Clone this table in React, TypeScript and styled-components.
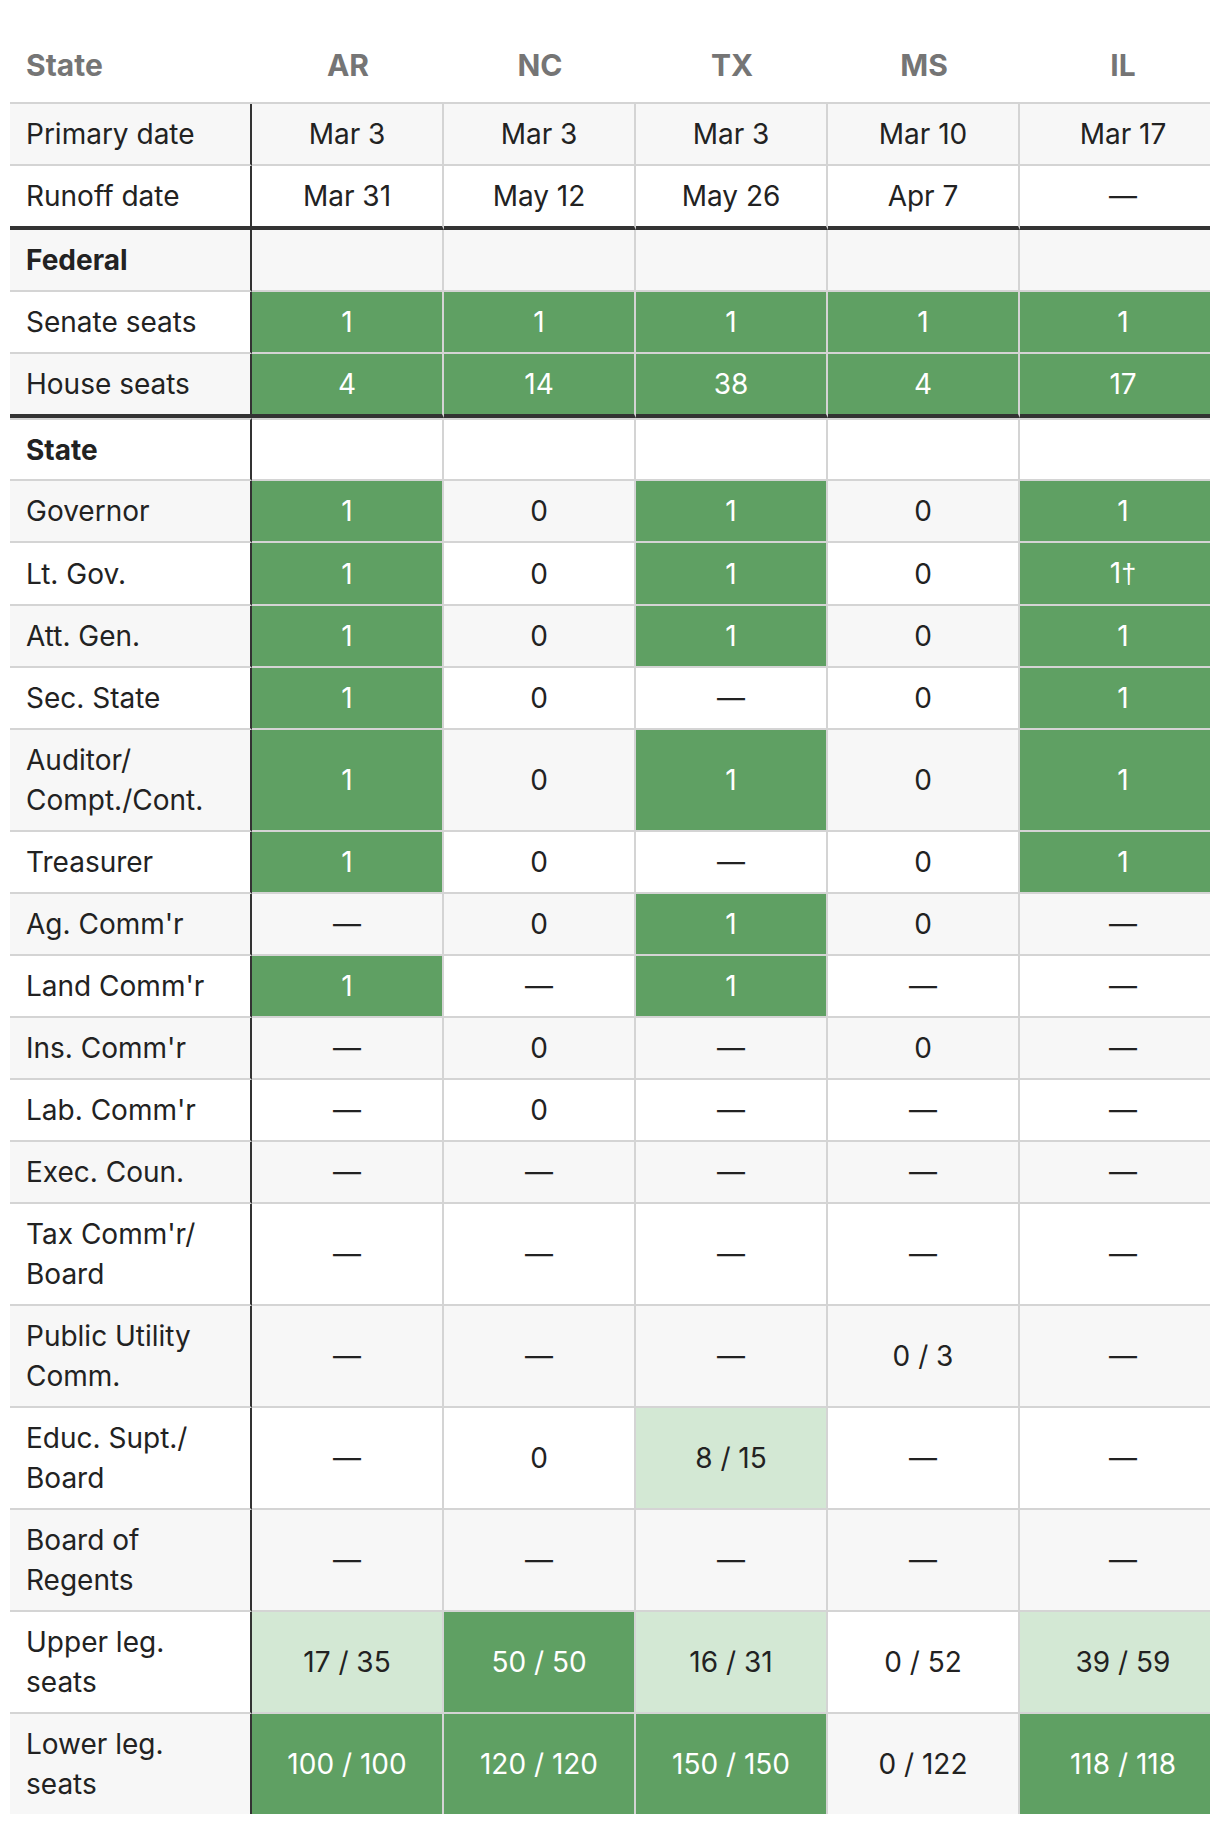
import React from 'react';
import styled, { createGlobalStyle, css } from 'styled-components';

type Tone = 'strong' | 'soft' | 'none';

interface Cell {
    text: string;
    tone?: Tone;
    mark?: string;
}

interface RowData {
    label: string;
    cells: Cell[];
    section?: boolean;
    rule?: boolean;
    topRule?: boolean;
}

const GlobalStyle = createGlobalStyle`
  *, *::before, *::after {
    box-sizing: border-box;
  }
  body {
    margin: 0 10px 10px;
    background: #fff;
    font-family: Inter, "Noto Sans", "Liberation Sans", sans-serif;
    color: #222;
  }
`;

// the table is a bit wider than the page, the last column gets clipped
const Scroller = styled.div`
  width: 100%;
  overflow: hidden;
`;

const Table = styled.table`
  width: calc(100% + 16px);
  table-layout: fixed;
  border-collapse: separate;
  border-spacing: 0;
  font-size: 28px;
  line-height: 40px;
`;

const Col = styled.col<{ $width?: number }>`
  ${p =>
        p.$width &&
        css`
      width: ${p.$width}px;
    `}
`;

const HeadCell = styled.th<{ $left?: boolean }>`
  padding: 45px 16px 17px;
  text-align: ${p => (p.$left ? 'left' : 'center')};
  font-size: 30px;
  font-weight: 700;
  color: #757575;
  border-bottom: 2px solid #d4d4d4;
`;

const Row = styled.tr<{ $striped: boolean; $rule?: boolean; $topRule?: boolean }>`
  background: ${p => (p.$striped ? '#f7f7f7' : '#fff')};

  & > th,
  & > td {
    border-bottom: ${p => (p.$rule ? '4px solid #333' : '2px solid #d4d4d4')};
    ${p =>
        p.$topRule &&
        css`
        border-top: 2px solid #d4d4d4;
        padding-bottom: 9px;
      `}
  }

  &:last-child > th,
  &:last-child > td {
    border-bottom: none;
  }
`;

const Label = styled.th<{ $section?: boolean }>`
  padding: 10px 16px;
  text-align: left;
  font-weight: ${p => (p.$section ? 700 : 400)};
  white-space: pre-line;
  border-right: 2px solid #333;
`;

const toneStyles: Record<Tone, ReturnType<typeof css>> = {
    strong: css`
    background: #5fa063;
    color: #fff;
  `,
    soft: css`
    background: #d3e8d4;
    color: #222;
  `,
    none: css``,
};

const Value = styled.td<{ $tone: Tone }>`
  padding: 10px 8px;
  text-align: center;
  vertical-align: middle;
  border-right: 2px solid #d4d4d4;
  ${p => toneStyles[p.$tone]}

  &:last-child {
    border-right: none;
  }
`;

const Mark = styled.span`
  font-family: "Liberation Sans", sans-serif;
  font-size: 27px;
`;

const states = ['AR', 'NC', 'TX', 'MS', 'IL'];

const D = '—';
const g = (text: string): Cell => ({ text, tone: 'strong' });
const l = (text: string): Cell => ({ text, tone: 'soft' });
const n = (text: string): Cell => ({ text });
const dashes = (): Cell[] => states.map(() => n(D));

const rows: RowData[] = [
    { label: 'Primary date', cells: ['Mar 3', 'Mar 3', 'Mar 3', 'Mar 10', 'Mar 17'].map(n) },
    { label: 'Runoff date', cells: ['Mar 31', 'May 12', 'May 26', 'Apr 7', D].map(n), rule: true },
    { label: 'Federal', cells: states.map(() => n('')), section: true },
    { label: 'Senate seats', cells: ['1', '1', '1', '1', '1'].map(g) },
    { label: 'House seats', cells: ['4', '14', '38', '4', '17'].map(g), rule: true },
    { label: 'State', cells: states.map(() => n('')), section: true, topRule: true },
    { label: 'Governor', cells: [g('1'), n('0'), g('1'), n('0'), g('1')] },
    { label: 'Lt. Gov.', cells: [g('1'), n('0'), g('1'), n('0'), { text: '1', tone: 'strong', mark: '†' }] },
    { label: 'Att. Gen.', cells: [g('1'), n('0'), g('1'), n('0'), g('1')] },
    { label: 'Sec. State', cells: [g('1'), n('0'), n(D), n('0'), g('1')] },
    { label: 'Auditor/\nCompt./Cont.', cells: [g('1'), n('0'), g('1'), n('0'), g('1')] },
    { label: 'Treasurer', cells: [g('1'), n('0'), n(D), n('0'), g('1')] },
    { label: "Ag. Comm'r", cells: [n(D), n('0'), g('1'), n('0'), n(D)] },
    { label: "Land Comm'r", cells: [g('1'), n(D), g('1'), n(D), n(D)] },
    { label: "Ins. Comm'r", cells: [n(D), n('0'), n(D), n('0'), n(D)] },
    { label: "Lab. Comm'r", cells: [n(D), n('0'), n(D), n(D), n(D)] },
    { label: 'Exec. Coun.', cells: dashes() },
    { label: "Tax Comm'r/\nBoard", cells: dashes() },
    { label: 'Public Utility\nComm.', cells: [n(D), n(D), n(D), n('0 / 3'), n(D)] },
    { label: 'Educ. Supt./\nBoard', cells: [n(D), n('0'), l('8 / 15'), n(D), n(D)] },
    { label: 'Board of\nRegents', cells: dashes() },
    { label: 'Upper leg.\nseats', cells: [l('17 / 35'), g('50 / 50'), l('16 / 31'), n('0 / 52'), l('39 / 59')] },
    { label: 'Lower leg.\nseats', cells: [g('100 / 100'), g('120 / 120'), g('150 / 150'), n('0 / 122'), g('118 / 118')] },
];

export default function App() {
    return (
        <>
            <GlobalStyle />
            <Scroller>
                <Table>
                    <colgroup>
                        <Col $width={242} />
                        <Col $width={192} />
                        <Col $width={192} />
                        <Col $width={192} />
                        <Col $width={192} />
                        <Col />
                    </colgroup>
                    <thead>
                        <tr>
                            <HeadCell $left>State</HeadCell>
                            {states.map(s => (
                                <HeadCell key={s}>{s}</HeadCell>
                            ))}
                        </tr>
                    </thead>
                    <tbody>
                        {rows.map((row, i) => (
                            <Row key={row.label} $striped={i % 2 === 0} $rule={row.rule} $topRule={row.topRule}>
                                <Label scope="row" $section={row.section}>
                                    {row.label}
                                </Label>
                                {row.cells.map((c, j) => (
                                    <Value key={j} $tone={c.tone ?? 'none'}>
                                        {c.text}
                                        {c.mark && <Mark>{c.mark}</Mark>}
                                    </Value>
                                ))}
                            </Row>
                        ))}
                    </tbody>
                </Table>
            </Scroller>
        </>
    );
}
